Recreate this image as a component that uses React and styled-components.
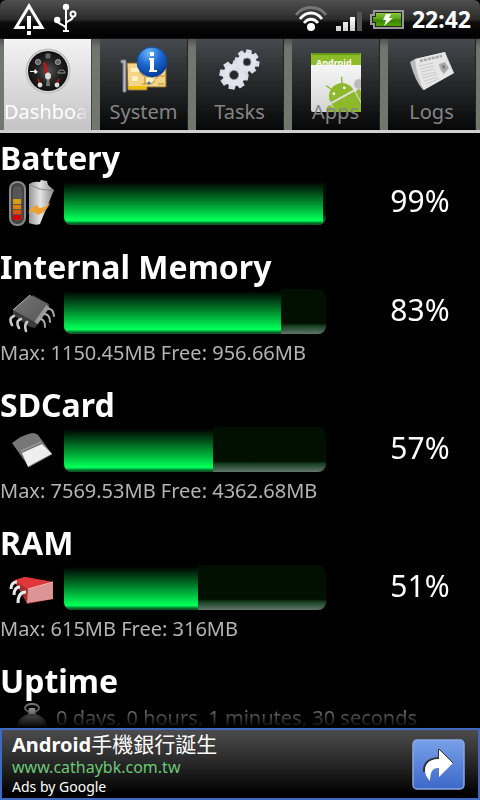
import { useState } from "react";
import styled, { createGlobalStyle } from "styled-components";

const GlobalStyle = createGlobalStyle`
  * {
    box-sizing: border-box;
  }

  body {
    margin: 0;
    background: #000;
    color: #fff;
    font-family: "Noto Sans", "Open Sans", "Noto Sans CJK TC", sans-serif;
  }
`;

const Screen = styled.div`
  display: flex;
  flex-direction: column;
  height: 100vh;
`;

const StatusBar = styled.header`
  display: flex;
  align-items: center;
  justify-content: space-between;
  height: 38px;
  flex-shrink: 0;
  padding: 0 9px 0 12px;
  border-radius: 6px 6px 0 0;
  background: linear-gradient(#505050, #2c2c2c 50%, #0c0c0c 60%, #000);
`;

const StatusGroup = styled.div`
  display: flex;
  align-items: center;
  gap: 8px;
`;

const Clock = styled.time`
  font-size: 23px;
  line-height: 38px;
  font-weight: 700;
`;

const TabBar = styled.nav`
  display: grid;
  grid-template-columns: repeat(5, minmax(0, 1fr));
  gap: 8px;
  flex-shrink: 0;
  padding: 0 4px;
  border-top: 1px solid #111;
  border-bottom: 3px solid #d0d0d0;
  background: linear-gradient(#555, #73756f 10%, #73756f);
`;

const Tab = styled.button`
  display: flex;
  flex-direction: column;
  align-items: center;
  height: 91px;
  padding: 1px 0 0;
  border: 0;
  border-right: 1px solid ${(props) => (props.$active ? "#444" : "#222")};
  border-bottom: ${(props) => (props.$active ? "0" : "1px solid #000")};
  background: ${(props) =>
    props.$active
      ? "linear-gradient(#f4f4f4, #dedede 45%, #c4c4c4)"
      : "linear-gradient(#454a4e, #292b2d 45%, #080808)"};
  color: ${(props) => (props.$active ? "#fff" : "#858585")};
  font-family: inherit;
  cursor: pointer;
`;

const TabIcon = styled.svg`
  width: 64px;
  height: 76px;
  flex-shrink: 0;
`;

const TabLabel = styled.span`
  position: relative;
  max-width: 100%;
  margin-top: -18px;
  overflow: hidden;
  font-size: 20px;
  line-height: 28px;
  white-space: nowrap;
  mask-image: ${(props) =>
    props.$fade ? "linear-gradient(90deg, #000 82%, transparent 98%)" : "none"};
`;

const Content = styled.main`
  flex: 1;
  min-height: 0;
  padding-top: 7px;
  overflow-y: auto;
  scrollbar-width: none;
  mask-image: linear-gradient(#000 calc(100% - 28px), transparent);
`;

const Section = styled.section`
  margin-bottom: 20px;
`;

const Heading = styled.h2`
  margin: 0 0 4px;
  font-size: 32px;
  line-height: 36px;
  font-weight: 700;
`;

const MeterRow = styled.div`
  display: grid;
  grid-template-columns: 64px minmax(0, 1fr) 120px;
  padding-bottom: 4px;
`;

const RowIcon = styled.svg`
  width: 64px;
  height: 48px;
  flex-shrink: 0;
  margin-bottom: -3px;
`;

const Track = styled.div`
  height: 45px;
  margin-right: 34px;
  border-radius: 8px;
  overflow: hidden;
  background: linear-gradient(#011001 76%, #174022 82%, #62756a);
`;

const Fill = styled.div`
  height: 100%;
  background: linear-gradient(
    #000 4%,
    #004d19 30%,
    #00a838 60%,
    #00f853 86%,
    #00ff58 90%,
    #00702a 96%,
    #144a24
  );
`;

const Percent = styled.span`
  font-size: 30px;
  line-height: 42px;
  text-align: center;
`;

const Meta = styled.p`
  margin: 0;
  font-size: 20px;
  line-height: 29px;
  color: #b4b4b4;
`;

const UptimeRow = styled.div`
  display: flex;

  ${Meta} {
    margin-left: -8px;
  }
`;

const Ad = styled.a`
  display: flex;
  align-items: center;
  justify-content: space-between;
  flex-shrink: 0;
  height: 72px;
  padding: 0 13px 0 10px;
  border: 2px solid #4069c2;
  background: linear-gradient(#4c4c4c, #262626 50%, #000 95%);
  color: #fff;
  text-decoration: none;
`;

const AdText = styled.div`
  display: flex;
  flex-direction: column;
`;

const AdTitle = styled.span`
  font-size: 21px;
  line-height: 25px;

  b {
    font-size: 20px;
  }
`;

const AdUrl = styled.span`
  font-size: 16px;
  line-height: 20px;
  color: #6cc878;
`;

const AdSource = styled.span`
  font-size: 14px;
  line-height: 20px;
`;

const WarningIcon = () => (
  <svg width="34" height="38" viewBox="0 0 34 38">
    <path d="M13 27.5H4L17 6l13 21.5h-9" fill="none" stroke="#fff" strokeWidth="3" />
    <path d="M15 16h4v13h-4zM15 31h4v4h-4z" fill="#fff" />
  </svg>
);

const UsbIcon = () => (
  <svg width="24" height="38" viewBox="0 0 24 38">
    <g fill="none" stroke="#fff" strokeWidth="2">
      <path d="M12 7v24M3 20c1 5 7 4 9 8M19 16c0 5-5 4-7 7" />
      <circle cx="19" cy="14" r="2.5" />
    </g>
    <g fill="#fff">
      <circle cx="12" cy="7" r="3.2" />
      <circle cx="3.2" cy="20" r="3.2" />
      <path d="M9 30h6v2H9z" />
    </g>
  </svg>
);

const WifiIcon = () => (
  <svg width="32" height="38" viewBox="0 0 32 38">
    <g fill="none" strokeWidth="2.8">
      <path d="M1 15C8 5 24 5 31 15" stroke="#777" />
      <path d="M5 19c6-8 16-8 22 0" stroke="#fff" />
      <path d="M9 23c4-5 10-5 14 0" stroke="#fff" />
    </g>
    <circle cx="16" cy="27" r="4" fill="#fff" />
  </svg>
);

const SignalIcon = () => (
  <svg width="27" height="38" viewBox="0 0 27 38">
    <defs>
      <linearGradient id="signal" x2="0" y2="1">
        <stop stopColor="#fff" />
        <stop offset="1" stopColor="#ccc" />
      </linearGradient>
    </defs>
    <path d="M1 26h5v5H1zM8 22h5v9H8zM15 17h5v14h-5z" fill="url(#signal)" />
    <path d="M22 12h5v19h-5z" fill="#555" />
  </svg>
);

const BatteryIcon = () => (
  <svg width="34" height="38" viewBox="0 0 34 38">
    <defs>
      <linearGradient id="charge" x2="0" y2="1">
        <stop stopColor="#8ac840" />
        <stop offset=".48" stopColor="#58a010" />
        <stop offset=".52" stopColor="#388000" />
        <stop offset="1" stopColor="#50a800" />
      </linearGradient>
    </defs>
    <path
      d="M4 11h29v17H4v-4H1v-9h3z"
      fill="#222"
      stroke="#999"
      strokeWidth="2"
    />
    <path d="M6 13h25v13H6v-4H3v-5h3z" fill="url(#charge)" />
    <path d="M16 14h5l-2 4h4l-9 8 2-6h-3z" fill="#fff" />
  </svg>
);

const Dashboard = () => (
  <TabIcon viewBox="0 0 64 76">
    <defs>
      <radialGradient id="dial">
        <stop stopColor="#555" />
        <stop offset=".6" stopColor="#222" />
        <stop offset="1" stopColor="#111" />
      </radialGradient>
    </defs>
    <circle cx="32" cy="31" r="22.5" fill="#bbb" />
    <circle cx="32" cy="31" r="21.5" fill="#d4d4d4" />
    <circle cx="32" cy="31" r="20" fill="url(#dial)" />
    <g fill="#666" stroke="#999">
      <circle cx="22" cy="22" r="2.6" />
      <circle cx="42" cy="22" r="2.6" />
      <path d="M30 14h4v4h-4z" stroke="#666" />
      <path d="M42 33c0-4 7-4 7 0z" fill="none" />
    </g>
    <path d="M14 31h4l1-2 3 3-3 2-1-2h-4z" fill="#eee" />
    <path d="m27 23 2-1 4 13h-3z" fill="#d01010" />
    <path d="m22 39 2 5M43 39l-2 5" stroke="#c01010" strokeWidth="2" />
    <g fill="#ddd">
      <path d="M31 38h2l1 8h-4z" fill="#777" />
      <ellipse cx="32" cy="36" rx="3" ry="3.5" />
      <circle cx="24" cy="45" r="2.4" />
      <circle cx="41" cy="45" r="2.4" />
    </g>
  </TabIcon>
);

const SystemInfo = () => (
  <TabIcon viewBox="0 0 64 76">
    <defs>
      <radialGradient id="info" cx=".4" cy=".2" r=".9">
        <stop stopColor="#70b8f8" />
        <stop offset=".45" stopColor="#1c68d0" />
        <stop offset="1" stopColor="#003088" />
      </radialGradient>
    </defs>
    <path d="M15 23h39v24H35v3H16z" fill="#f4d488" stroke="#8a6420" />
    <path d="M17 46h17v3H17z" fill="#f0c000" />
    <path d="M19 28h8v4h-8zM20 36h6v5h-6zM34 38h7v4h-7z" fill="#fff0c0" />
    <path
      d="M28 25v8l5 4v7M43 39l4-3h6M30 44h9l4-3M46 44h6"
      fill="none"
      stroke="#c08828"
    />
    <circle cx="37" cy="43" r="1.6" fill="#3080c0" />
    <path d="M9 20h5v32h-3V23H9z" fill="#b8b8c4" stroke="#707080" />
    <circle cx="40" cy="22" r="15" fill="url(#info)" stroke="#1448a0" />
    <path
      d="M37 18h5v12h3v2h-8v-2h1V20h-1zM38 12h4v4h-4z"
      fill="#fff"
    />
  </TabIcon>
);

const Gear = ({ x, y, r }) => (
  <g transform={`translate(${x} ${y}) scale(${r / 14})`}>
    {[0, 45, 90, 135, 180, 225, 270, 315].map((angle) => (
      <path
        key={angle}
        d="M-3.8-9-3-14.5h6L3.8-9z"
        fill="#dcdce8"
        transform={`rotate(${angle + 10})`}
      />
    ))}
    <circle r="7.8" fill="none" stroke="#e4e4ee" strokeWidth="6.5" />
    <circle r="4.6" fill="#26282a" stroke="#9898a8" />
  </g>
);

const Tasks = () => (
  <TabIcon viewBox="0 0 64 76">
    <Gear x={26} y={35} r={14} />
    <Gear x={39} y={22} r={12} />
  </TabIcon>
);

const Apps = () => (
  <TabIcon viewBox="0 0 64 76">
    <defs>
      <linearGradient id="card" x2="0" y2="1">
        <stop stopColor="#fff" />
        <stop offset="1" stopColor="#d4d4d4" />
      </linearGradient>
      <clipPath id="cardClip">
        <path d="M7 14h50v58H7z" />
      </clipPath>
    </defs>
    <rect x="7" y="13" width="50" height="59" rx="2" fill="url(#card)" />
    <path d="M7 25V15q0-2 2-2h46q2 0 2 2v10z" fill="#8cbc28" />
    <path d="M8 14h48" stroke="#6c9818" strokeWidth="2" />
    <text x="12" y="26" fill="#fff" fontSize="9" fontWeight="700">
      Android
    </text>
    <g clipPath="url(#cardClip)">
      <circle cx="55" cy="44" r="5" fill="#bbb" />
      <g transform="translate(38 56) rotate(-29)" fill="#8db92a">
        <path d="M-13 0a13 13 0 0 1 26 0z" />
        <path d="m-6-11-3-6M6-11l3-6" stroke="#8db92a" strokeWidth="1.4" />
        <circle cx="-6" cy="-6" r="1.4" fill="#fff" />
        <circle cx="6" cy="-6" r="1.4" fill="#fff" />
        <path d="M-13 2h26v26h-26z" />
        <rect x="-19" y="2" width="5" height="18" rx="2.5" />
        <rect x="14" y="2" width="5" height="18" rx="2.5" />
      </g>
    </g>
  </TabIcon>
);

const Logs = () => (
  <TabIcon viewBox="0 0 64 76">
    <path d="m10 22 5-3 30-7q2 4 9 21L23 50q-8-9-13-28z" fill="#bbb" />
    <path d="m15 19 30-7q2 8 9 21L24 50q-7-12-9-31z" fill="#e6e6e6" />
    <path d="m20 21 22-5" stroke="#aaa" strokeWidth="2.5" strokeDasharray="3 1" />
    <path
      d="m19 26 14-3M20 29l14-3M21 32l14-3M22 35l14-3M23 38l14-4M24 41l14-4M26 44l13-5"
      stroke="#cacaca"
    />
    <path d="m39 24 6-2 4 6-5 6q-4-3-5-10z" fill="#aaa" />
    <path d="m42 25 3 1-1 4z" fill="#666" />
  </TabIcon>
);

const BatteryLevel = () => (
  <RowIcon viewBox="0 0 64 48">
    <defs>
      <linearGradient id="cell">
        <stop stopColor="#999" />
        <stop offset=".45" stopColor="#e4e4e4" />
        <stop offset="1" stopColor="#888" />
      </linearGradient>
    </defs>
    <rect x="10" y="2" width="15" height="43" rx="7" fill="#444" stroke="#888" strokeWidth="2" />
    <rect x="13" y="6" width="9" height="35" rx="4" fill="#555" />
    <path d="M13 19h8v5h-8z" fill="#d8a010" />
    <path d="M13 25h8v4h-8z" fill="#e08000" />
    <path d="M13 30h8v4h-8z" fill="#e05000" />
    <path d="M13 35h8v5h-8z" fill="#d80000" />
    <path d="M29 4q5-3 11-2l1-2 6 1 1 4 6 5-14 34q-4 2-11-1z" fill="url(#cell)" />
    <path d="m30 5 10 4 14 2" fill="none" stroke="#888" />
    <path d="M28 33q4-7 9-8l2 3q6 0 11-6-2 9-12 13l-4-3q-3-1-6 1z" fill="#f0a030" />
  </RowIcon>
);

const Chip = () => (
  <RowIcon viewBox="0 0 64 48">
    <defs>
      <linearGradient id="chip" x2="1" y2="1">
        <stop stopColor="#777" />
        <stop offset="1" stopColor="#555" />
      </linearGradient>
    </defs>
    <path d="m13 22 20-16 16 9v4L35 39l-5-1-17-12z" fill="#3c3c3c" />
    <path d="m13 21 17-15 18 9-13 18z" fill="url(#chip)" />
    <path d="m13 21 17-15" stroke="#bbb" />
    <path d="m36 34 12-17" stroke="#999" strokeWidth="4" />
    <g fill="none" stroke="#ccc" strokeWidth="2.6" strokeLinecap="round">
      <path d="M14 27q-6 2-2 9M21 30q-6 2-2 9M27 33q-3 3-1 9" />
      <path d="M48 20q5-1 6 7M44 25q6 0 6 8M40 30q5 0 5 8" stroke="#aaa" strokeWidth="2" />
    </g>
  </RowIcon>
);

const Card = () => (
  <RowIcon viewBox="0 0 64 48">
    <path d="M12 16q10-8 20-10 4 0 6 2l14 19-23 13z" fill="#777" />
    <path d="m22 26 20-9 10 10-24 13z" fill="#eee" />
    <path d="m21 24 20-9" stroke="#aaa" />
    <path d="m28 40 24-13" stroke="#888" />
  </RowIcon>
);

const Memory = () => (
  <RowIcon viewBox="0 0 64 48">
    <path d="m14 16 11-4 28 5v17l-26 5-5-10z" fill="#a83030" />
    <path d="m14 15 11-3 28 5-25 7z" fill="#e03838" />
    <path d="m28 24 25-7v17l-26 4z" fill="#dc9494" />
    <path d="m28 24 25-7" stroke="#f4b8b8" />
    <g fill="none" stroke="#e8e8e8" strokeWidth="3">
      <path d="M17 17q-6 0-6 7M20 22q-6 0-6 8M26 27q-8 0-8 11" />
    </g>
  </RowIcon>
);

const Weight = () => (
  <RowIcon viewBox="0 0 64 48">
    <ellipse cx="32" cy="5" rx="7" ry="4" fill="none" stroke="#888" strokeWidth="2" />
    <path d="M29 5h6l1 8h-8z" fill="#ccc" />
    <path d="M16 25q3-12 12-14h8q9 2 12 14v20H16z" fill="#777" />
    <path d="M20 22q3-8 9-9h6q6 1 9 9z" fill="#999" />
  </RowIcon>
);

const tabs = [
  { label: "Dashboard", Icon: Dashboard },
  { label: "System", Icon: SystemInfo },
  { label: "Tasks", Icon: Tasks },
  { label: "Apps", Icon: Apps },
  { label: "Logs", Icon: Logs },
];

const meters = [
  { title: "Battery", percent: 99, Icon: BatteryLevel },
  {
    title: "Internal Memory",
    percent: 83,
    Icon: Chip,
    meta: "Max: 1150.45MB Free: 956.66MB",
  },
  {
    title: "SDCard",
    percent: 57,
    Icon: Card,
    meta: "Max: 7569.53MB Free: 4362.68MB",
  },
  { title: "RAM", percent: 51, Icon: Memory, meta: "Max: 615MB Free: 316MB" },
];

const App = () => {
  const [active, setActive] = useState("Dashboard");

  return (
    <Screen>
      <GlobalStyle />
      <StatusBar>
        <StatusGroup>
          <WarningIcon />
          <UsbIcon />
        </StatusGroup>
        <StatusGroup>
          <WifiIcon />
          <SignalIcon />
          <BatteryIcon />
          <Clock>22:42</Clock>
        </StatusGroup>
      </StatusBar>
      <TabBar>
        {tabs.map(({ label, Icon }) => (
          <Tab
            key={label}
            type="button"
            $active={label === active}
            onClick={() => setActive(label)}
          >
            <Icon />
            <TabLabel $fade={label.length > 8}>{label}</TabLabel>
          </Tab>
        ))}
      </TabBar>
      <Content>
        {meters.map(({ title, percent, Icon, meta }) => (
          <Section key={title}>
            <Heading>{title}</Heading>
            <MeterRow>
              <Icon />
              <Track
                role="progressbar"
                aria-label={title}
                aria-valuenow={percent}
              >
                <Fill style={{ width: `${percent}%` }} />
              </Track>
              <Percent>{percent}%</Percent>
            </MeterRow>
            {meta && <Meta>{meta}</Meta>}
          </Section>
        ))}
        <Section>
          <Heading>Uptime</Heading>
          <UptimeRow>
            <Weight />
            <Meta>0 days, 0 hours, 1 minutes, 30 seconds</Meta>
          </UptimeRow>
        </Section>
      </Content>
      <Ad href="#ad">
        <AdText>
          <AdTitle>
            <b>Android</b>手機銀行誕生
          </AdTitle>
          <AdUrl>www.cathaybk.com.tw</AdUrl>
          <AdSource>Ads by Google</AdSource>
        </AdText>
        <svg width="53" height="51" viewBox="0 0 53 51">
          <defs>
            <linearGradient id="go" x2="0" y2="1">
              <stop stopColor="#78a0e8" />
              <stop offset="1" stopColor="#3c68c8" />
            </linearGradient>
          </defs>
          <rect x="1" y="1" width="51" height="49" rx="4" fill="url(#go)" stroke="#88a8e8" strokeWidth="1.5" />
          <path d="M27 10v9q-16 1-15 14" fill="none" stroke="#333" strokeWidth="2" />
          <path d="m27 10 14 14-14 14v-9q-9-1-9 13-5-5-5-11 1-11 14-11z" fill="#fff" />
          <path d="m27 10 14 14" stroke="#333" />
        </svg>
      </Ad>
    </Screen>
  );
};

export default App;
